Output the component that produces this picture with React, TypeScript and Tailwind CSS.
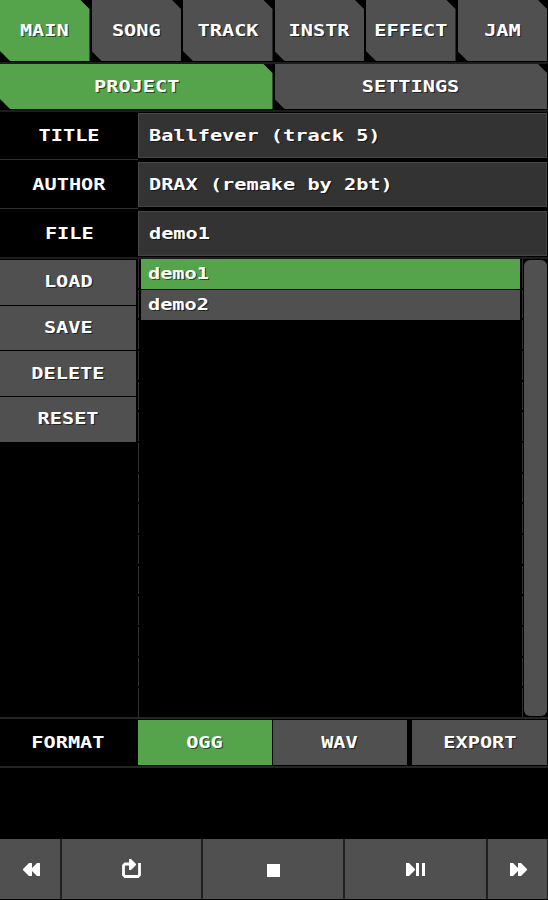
import type { ReactNode } from "react";
import { clsx } from "clsx";

const TABS = ["MAIN", "SONG", "TRACK", "INSTR", "EFFECT", "JAM"];
const FIELDS = [
  { label: "TITLE", value: "Ballfever (track 5)" },
  { label: "AUTHOR", value: "DRAX (remake by 2bt)" },
  { label: "FILE", value: "demo1" },
];
const ACTIONS = ["LOAD", "SAVE", "DELETE", "RESET"];
const FILES = ["demo1", "demo2"];
// list rows that fit in the viewport, each one draws a piece of the side rule
const SLOTS = Array.from({ length: 15 }, (_, i) => i);

function Label({ children, left = false }: { children: ReactNode; left?: boolean }) {
  return (
    <span
      className={clsx(
        "inline-block scale-x-[1.265] whitespace-pre text-[16px] leading-5 font-bold text-white [text-shadow:1px_1px_0_#0008]",
        left ? "origin-left" : "origin-center"
      )}
    >
      {children}
    </span>
  );
}

function Tab({ active = false, children }: { active?: boolean; children: ReactNode }) {
  return (
    <button
      className={clsx(
        "flex min-w-0 flex-1 items-center justify-center [clip-path:polygon(0_0,calc(100%-9px)_0,100%_9px,100%_100%,10px_100%,0_calc(100%-10px))]",
        active ? "bg-[#55a34b]" : "bg-[#505050]"
      )}
    >
      <Label>{children}</Label>
    </button>
  );
}

function Rule() {
  return (
    <div className="flex w-px flex-col gap-[2px]">
      {SLOTS.map((i) => (
        <div key={i} className="flex-1 bg-[#303030]" />
      ))}
    </div>
  );
}

function Transport({ className, children }: { className: string; children: ReactNode }) {
  return (
    <button className={clsx("flex items-center justify-center bg-[#505050] pt-[2px]", className)}>
      {children}
    </button>
  );
}

export default function App() {
  return (
    <div className="flex h-[900px] w-[548px] flex-col overflow-hidden bg-black font-['DejaVu_Sans_Mono',monospace]">
      <div className="flex h-[61px] shrink-0 gap-[2px] pr-px">
        {TABS.map((t, i) => (
          <Tab key={t} active={i === 0}>{t}</Tab>
        ))}
      </div>
      <div className="h-[3px] shrink-0 border-t border-black bg-[#1c1c1c]" />
      <div className="flex h-[45px] shrink-0 gap-[2px] pr-px">
        <Tab active>PROJECT</Tab>
        <Tab>SETTINGS</Tab>
      </div>
      <div className="mb-px h-[3px] shrink-0 border-t border-black bg-[#1c1c1c]" />

      {FIELDS.map((f) => (
        <div key={f.label} className="flex h-[49px] shrink-0 pr-px">
          <div className="mb-[2px] flex w-[138px] items-center justify-center border-b border-[#303030]">
            <Label>{f.label}</Label>
          </div>
          <div className="mb-[4px] flex flex-1 items-center border border-t-[#4a4a4a] border-r-[#444] border-b-[#444] border-l-[#4a4a4a] bg-[#333] pl-[10px]">
            <Label left>{f.value}</Label>
          </div>
        </div>
      ))}

      <div className="-mt-[3px] flex h-[460px] shrink-0 border-t-2 border-[#1c1c1c] pr-px">
        <div className="flex w-[136px] flex-col gap-px pt-px">
          {ACTIONS.map((a) => (
            <button key={a} className="flex h-[44.7px] shrink-0 items-center justify-center bg-[#505050]">
              <Label>{a}</Label>
            </button>
          ))}
        </div>
        <div className="ml-[2px] flex w-[385px]">
          <Rule />
          <div className="flex flex-1 flex-col gap-px px-[2px]">
            {FILES.map((f, i) => (
              <button
                key={f}
                className={clsx(
                  "flex h-[30px] shrink-0 items-center pl-[7px]",
                  i === 0 ? "bg-[#55a34b]" : "bg-[#505050]"
                )}
              >
                <Label left>{f}</Label>
              </button>
            ))}
          </div>
          <Rule />
        </div>
        <div className="mt-px mb-px ml-px flex-1 rounded-[6px] bg-[#505050]" />
      </div>

      <div className="flex h-[51px] shrink-0 border-y-2 border-[#252525] py-px pr-px">
        <div className="flex w-[138px] items-center justify-center pr-[2px]">
          <Label>FORMAT</Label>
        </div>
        <button className="flex w-[134px] items-center justify-center bg-[#55a34b] pr-[2px]">
          <Label>OGG</Label>
        </button>
        <button className="ml-px flex w-[134px] items-center justify-center bg-[#505050] pr-px">
          <Label>WAV</Label>
        </button>
        <button className="ml-[5px] flex flex-1 items-center justify-center bg-[#505050]">
          <Label>EXPORT</Label>
        </button>
      </div>

      <div className="mt-auto mb-px flex h-[60px] shrink-0 gap-[2px] bg-[#202020] pr-px">
        <Transport className="w-[60px]">
          <svg width="17" height="14" viewBox="0 0 17 14" fill="#fff" className="translate-x-px">
            <path d="M17 0H14L9 5V0H6L0 6V7L6 13H9V8L14 13H17Z" />
          </svg>
        </Transport>
        <Transport className="w-[139px]">
          <svg width="22" height="20" viewBox="0 0 22 20" fill="none" className="-translate-y-px">
            <path d="M8 5H4L2.5 6.5V16L4 17.5H17L18.5 16V4" stroke="#fff" strokeWidth="2.8" />
            <path d="M8 0H10L15 5V6L10 11H8Z" fill="#fff" />
          </svg>
        </Transport>
        <Transport className="w-[140px]">
          <span className="size-[13px] bg-white" />
        </Transport>
        <Transport className="w-[141px]">
          <svg width="20" height="14" viewBox="0 0 20 14" fill="#fff">
            <path d="M0 0H3L9 6V7L3 13H0ZM10 0H13V13H10ZM16 0H19V13H16Z" />
          </svg>
        </Transport>
        <Transport className="flex-1">
          <svg width="17" height="14" viewBox="0 0 17 14" fill="#fff" className="translate-x-px">
            <path d="M0 0H3L8 5V0H11L17 6V7L11 13H8V8L3 13H0Z" />
          </svg>
        </Transport>
      </div>
    </div>
  );
}
